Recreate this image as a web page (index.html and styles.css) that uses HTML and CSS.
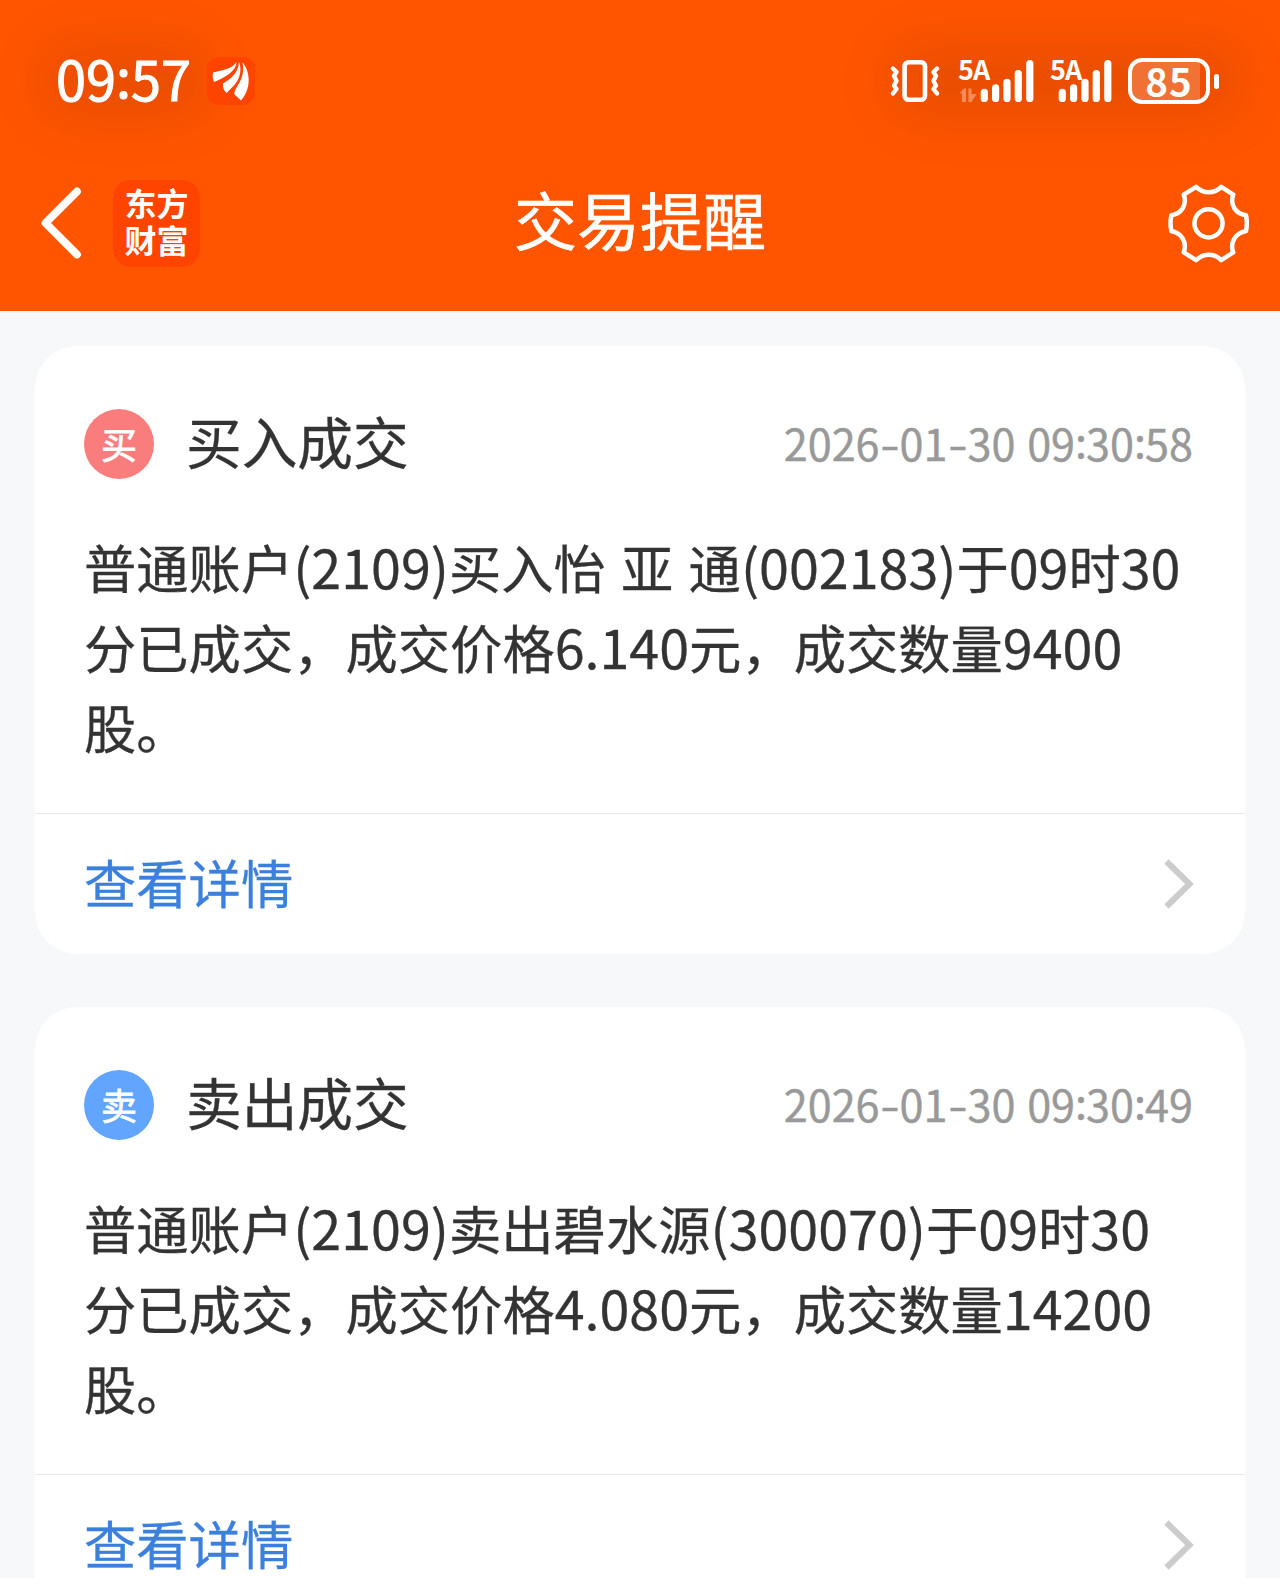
FILE: index.html
```html
<!DOCTYPE html>
<html lang="zh-CN">
<head>
  <meta charset="UTF-8">
  <title>交易提醒</title>
  <link rel="stylesheet" href="styles.css">
</head>
<body>
  <header class="header">
    <div class="status-bar">
      <div class="status-left">
        <span class="clock">09<b>:</b>57</span>
        <svg class="app-icon" viewBox="0 0 48 48">
          <rect width="48" height="48" rx="12" fill="#ff4400"/>
          <path d="M6 15.500C14 13 24 13 29.500 5C29.500 14 18 20.500 7 25C5.500 22 5.500 19 6 15.500Z" fill="#fff"/>
          <path d="M16 26.500C23 22 31 17 32 5C36 15 31 25 25 30.500L19.500 36C16.500 33 15.500 30 16 26.500Z" fill="#fff"/>
          <path d="M35.500 5.500C42 12 46 30 34 43.500L27.500 37.500C26.500 30 39 24 35.500 5.500Z" fill="#fff"/>
        </svg>
      </div>
      <div class="status-right">
        <svg class="vibrate" viewBox="0 0 50 42" fill="none" stroke="#fff" stroke-linecap="round" stroke-linejoin="round">
          <rect x="14.600" y="2.300" width="20.400" height="37.400" rx="4" stroke-width="4.600"/>
          <path d="M3 8.500L6.500 12L4 16L6.500 21L4 25.500L6.500 29L3 33.500M47 8.500L43.500 12L46 16L43.500 21L46 25.500L43.500 29L47 33.500" stroke-width="4.400"/>
        </svg>
        <div class="signal signal-data">
          <span class="network">5A</span>
          <svg class="bars" viewBox="0 0 76 42">
            <g fill="#fff" opacity=".35">
              <path d="M1.500 33.500L6 28.500H8V42H4V33.500ZM10.500 28.500H13.500V34H18.500L13.500 42H10.500Z"/>
            </g>
            <g fill="#fff">
              <rect x="22.700" y="28.700" width="7.200" height="13.300" rx="3.600"/>
              <rect x="34" y="24.300" width="7.200" height="17.700" rx="3.600"/>
              <rect x="45.400" y="18.700" width="7.200" height="23.300" rx="3.600"/>
              <rect x="56.700" y="10" width="7.200" height="32" rx="3.600"/>
              <rect x="68.200" y="0" width="7.200" height="42" rx="3.600"/>
            </g>
          </svg>
        </div>
        <div class="signal">
          <span class="network">5A</span>
          <svg class="bars bars-narrow" viewBox="14 0 62 42">
            <g fill="#fff">
              <rect x="22.700" y="28.700" width="7.200" height="13.300" rx="3.600"/>
              <rect x="34" y="24.300" width="7.200" height="17.700" rx="3.600"/>
              <rect x="45.400" y="18.700" width="7.200" height="23.300" rx="3.600"/>
              <rect x="56.700" y="10" width="7.200" height="32" rx="3.600"/>
              <rect x="68.200" y="0" width="7.200" height="42" rx="3.600"/>
            </g>
          </svg>
        </div>
        <div class="battery"><span class="battery-text">85</span></div>
        <span class="battery-cap"></span>
      </div>
    </div>

    <nav class="nav">
      <div class="nav-left">
        <svg class="back" viewBox="0 0 42 72">
          <path d="M37 4.500L5.500 36L37 67.500" fill="none" stroke="#fff" stroke-width="7.800" stroke-linecap="round" stroke-linejoin="round"/>
        </svg>
        <div class="brand">东方<br>财富</div>
      </div>
      <h1 class="title">交易提醒</h1>
      <div class="nav-right">
        <svg class="gear" viewBox="86 70 242 235" fill="none" stroke="#fff" stroke-width="13.500" stroke-linejoin="round">
          <path d="M170 78Q186 94 208 94Q230 94 245 78L281 101C270 132 288 158 319 163Q324 187 319 210C288 216 270 242 281 274L245 297Q230 281 208 281Q186 281 170 297L133 274C144 242 126 216 96 210Q91 187 96 163C126 158 144 132 133 101Z"/>
          <circle cx="207" cy="187" r="42"/>
        </svg>
      </div>
    </nav>
  </header>

  <main class="list">
    <article class="card">
      <div class="card-head">
        <span class="badge buy">买</span>
        <h2 class="card-title">买入成交</h2>
        <time class="date">2026<i>-</i>01<i>-</i>30 09<b>:</b>30<b>:</b>58</time>
      </div>
      <p class="content">普通账户<span class="num">(2109)</span>买入怡 亚 通<span class="num">(002183)</span>于<span class="num">09</span>时<span class="num">30</span>分已成交，成交价格<span class="num">6.140</span>元，成交数量<span class="num">9400</span>股。</p>
      <div class="card-foot">
        <span class="detail">查看详情</span>
        <svg class="arrow" viewBox="0 0 30 50">
          <path d="M2.500 2.500L25.500 25L2.500 47.500" fill="none" stroke="#ccc" stroke-width="6"/>
        </svg>
      </div>
    </article>

    <article class="card">
      <div class="card-head">
        <span class="badge sell">卖</span>
        <h2 class="card-title">卖出成交</h2>
        <time class="date">2026<i>-</i>01<i>-</i>30 09<b>:</b>30<b>:</b>49</time>
      </div>
      <p class="content">普通账户<span class="num">(2109)</span>卖出碧水源<span class="num">(300070)</span>于<span class="num">09</span>时<span class="num">30</span>分已成交，成交价格<span class="num">4.080</span>元，成交数量<span class="num">14200</span>股。</p>
      <div class="card-foot">
        <span class="detail">查看详情</span>
        <svg class="arrow" viewBox="0 0 30 50">
          <path d="M2.500 2.500L25.500 25L2.500 47.500" fill="none" stroke="#ccc" stroke-width="6"/>
        </svg>
      </div>
    </article>
  </main>
</body>
</html>
```
FILE: styles.css
```css
* {
  box-sizing: border-box;
}

body {
  margin: 0;
  height: 1578px;
  overflow: hidden;
  background: #f6f8fa;
  color: #333;
  font-family: "Noto Sans CJK SC", sans-serif;
}

h1, h2, p {
  margin: 0;
  font-weight: 400;
}

svg {
  display: block;
  flex: none;
}

/* header */
.header {
  position: relative;
  z-index: 0;
  height: 311px;
  color: #fff;
  background: #ff5500;
  overflow: hidden;
}

/* soft shade behind the clock and the status icons */
.header::before,
.header::after {
  content: "";
  position: absolute;
  z-index: -1;
  top: 45px;
  height: 72px;
  border-radius: 30px;
  background: rgba(0, 0, 0, .09);
  filter: blur(26px);
}

.header::before {
  left: 42px;
  width: 165px;
}

.header::after {
  right: 40px;
  width: 350px;
}

.status-bar {
  display: flex;
  justify-content: space-between;
  height: 160px;
  padding: 0 61px 0 56px;
}

.status-left,
.status-right {
  display: flex;
  align-items: center;
  height: 162px;
}

.clock {
  width: 151px;
  font-size: 54px;
  line-height: 80px;
  padding-bottom: 6px;
  white-space: nowrap;
  -webkit-text-stroke: 1px #fff;
}

.clock b {
  position: relative;
  top: -3px;
  font-weight: 400;
}

.app-icon {
  width: 48px;
  height: 48px;
}

.vibrate {
  width: 50px;
  height: 42px;
  margin-right: 18px;
}

.signal {
  position: relative;
  margin-right: 16px;
}

.network {
  position: absolute;
  left: 0;
  top: -5px;
  font-size: 27px;
  line-height: 27px;
  font-weight: 700;
  letter-spacing: -1px;
}

.bars {
  width: 76px;
  height: 42px;
}

.bars-narrow {
  width: 62px;
}

.battery {
  width: 82px;
  height: 46px;
  border: 4px solid #fff;
  border-radius: 14px;
  background: linear-gradient(to right, rgba(255, 255, 255, .2) 68px, transparent 68px);
  text-align: center;
}

.battery-text {
  display: block;
  margin-top: -1px;
  font-size: 38.500px;
  line-height: 38px;
  font-weight: 700;
  letter-spacing: 1px;
}

.battery-cap {
  width: 5px;
  height: 15px;
  margin-left: 4px;
  border-radius: 3px;
  background: #fff;
}

.nav {
  display: grid;
  grid-template-columns: 1fr auto 1fr;
  align-items: center;
  height: 126px;
  padding: 0 31px 0 40px;
}

.nav-left {
  display: flex;
  align-items: center;
  gap: 31px;
}

.back {
  width: 42px;
  height: 72px;
}

.brand {
  width: 87px;
  height: 87px;
  padding-top: 4px;
  border-radius: 18px;
  background: #ff4400;
  font-size: 32px;
  line-height: 37px;
  font-weight: 700;
  text-align: center;
}

.title {
  padding: 0 9px 10px 0;
  font-size: 63px;
  line-height: 80px;
  -webkit-text-stroke: .6px #fff;
}

.nav-right {
  display: flex;
  justify-content: flex-end;
}

.gear {
  width: 81px;
  height: 79px;
}

/* list */
.list {
  display: flex;
  flex-direction: column;
  gap: 53px;
  padding: 35px;
}

.card {
  height: 608px;
  flex: none;
  border-radius: 42px;
  background: #fff;
}

.card-head {
  display: flex;
  align-items: center;
  height: 196px;
  padding: 0 52px 0 49px;
}

.badge {
  width: 70px;
  height: 70px;
  border-radius: 50%;
  color: #fff;
  font-size: 36px;
  line-height: 68px;
  text-align: center;
  -webkit-text-stroke: .8px #fff;
}

.buy {
  background: #fa7d7e;
}

.sell {
  background: #62a5ff;
}

.card-title {
  margin-left: 32px;
  padding-bottom: 9px;
  font-size: 55.700px;
  line-height: 80px;
  -webkit-text-stroke: .3px #333;
}

.date {
  margin-left: auto;
  padding-bottom: 5px;
  color: #999;
  font-size: 43.200px;
  line-height: 60px;
  white-space: nowrap;
  word-spacing: 2px;
  -webkit-text-stroke: .4px #999;
}

.date i {
  display: inline-block;
  width: 20px;
  font-style: normal;
  text-align: center;
  transform: scaleX(1.300);
}

.date b {
  position: relative;
  top: -3px;
  display: inline-block;
  width: 11px;
  font-weight: 400;
  text-align: center;
}

.content {
  height: 273px;
  padding: 0 48px 0 49px;
  margin-top: -16px;
  font-size: 52.300px;
  line-height: 80px;
  word-spacing: 3.500px;
  -webkit-text-stroke: .3px #333;
}

.num {
  font-size: 53.800px;
  line-height: 1;
}

.card-foot {
  display: flex;
  align-items: center;
  justify-content: space-between;
  margin-top: 14px;
  height: 141px;
  padding: 0 51px 0 49px;
  border-top: 1px solid #ebebeb;
}

.detail {
  padding-bottom: 7px;
  color: #3a80dc;
  font-size: 52.300px;
  line-height: 80px;
  -webkit-text-stroke: .3px #3a80dc;
}

.arrow {
  width: 30px;
  height: 50px;
}
```
